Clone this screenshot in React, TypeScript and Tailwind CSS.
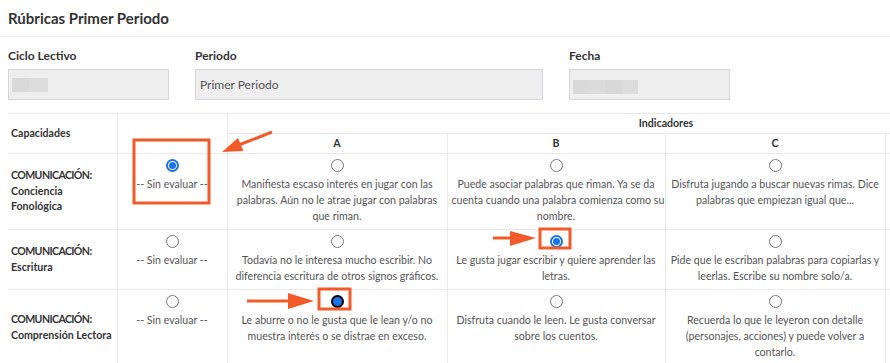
import React from "react";

const font = { fontFamily: "Lato, 'Noto Sans', sans-serif" };

type Cell = { lines: string[]; state?: "on" | "focus" };
type Row = { name: string[]; none: "on" | "off"; cells: Cell[] };

const rows: Row[] = [
  {
    name: ["COMUNICACIÓN:", "Conciencia", "Fonológica"],
    none: "on",
    cells: [
      { lines: ["Manifiesta escaso interés en jugar con las", "palabras. Aún no le atrae jugar con palabras", "que riman."] },
      { lines: ["Puede asociar palabras que riman. Ya se da", "cuenta cuando una palabra comienza como su", "nombre."] },
      { lines: ["Disfruta jugando a buscar nuevas rimas. Dice", "palabras que empiezan igual que..."] },
    ],
  },
  {
    name: ["COMUNICACIÓN:", "Escritura"],
    none: "off",
    cells: [
      { lines: ["Todavía no le interesa mucho escribir. No", "diferencia escritura de otros signos gráficos."] },
      { lines: ["Le gusta jugar escribir y quiere aprender las", "letras."], state: "on" },
      { lines: ["Pide que le escriban palabras para copiarlas y", "leerlas. Escribe su nombre solo/a."] },
    ],
  },
  {
    name: ["COMUNICACIÓN:", "Comprensión Lectora"],
    none: "off",
    cells: [
      { lines: ["Le aburre o no le gusta que le lean y/o no", "muestra interés o se distrae en exceso."], state: "focus" },
      { lines: ["Disfruta cuando le leen. Le gusta conversar", "sobre los cuentos."] },
      { lines: ["Recuerda lo que le leyeron con detalle", "(personajes, acciones) y puede volver a", "contarlo."] },
    ],
  },
];

function Radio({ state }: { state?: "on" | "focus" }) {
  if (state === "focus") {
    return (
      <span className="mx-auto block h-[13px] w-[13px] rounded-full border-2 border-black bg-[#1a73e8]" />
    );
  }
  if (state === "on") {
    return (
      <span className="mx-auto flex h-[13px] w-[13px] items-center justify-center rounded-full border-2 border-[#1a73e8] bg-white">
        <span className="h-[7px] w-[7px] rounded-full bg-[#1a73e8]" />
      </span>
    );
  }
  return <span className="mx-auto block h-[13px] w-[13px] rounded-full border border-[#767676] bg-white" />;
}

function Field({ label, width, children }: { label: string; width: string; children?: React.ReactNode }) {
  return (
    <div className="flex flex-col">
      <span className="text-[12px] leading-[15px] font-bold text-[#333]">{label}</span>
      <div className={`mt-[6px] flex h-[31px] items-center border border-[#d3d5db] bg-[#eeeeee] px-[3px] ${width}`}>
        {children}
      </div>
    </div>
  );
}

export default function App() {
  return (
    <div className="relative h-[363px] w-[890px] overflow-hidden bg-white" style={font}>
      <div className="flex h-[37px] items-center border-b border-[#f0f0f0] px-[8px]">
        <h1 className="text-[15px] font-bold text-[#333]">Rúbricas Primer Periodo</h1>
      </div>

      <div className="flex px-[8px] pt-[11px]">
        <Field label="Ciclo Lectivo" width="w-[161px]">
          <span className="flex h-[14px]">
            <span className="w-[17px] bg-[#d9d9d9]" />
            <span className="w-[19px] bg-[#dcdcdc]" />
          </span>
        </Field>
        <div className="ml-[26px]">
          <Field label="Periodo" width="w-[348px]">
            <span className="pl-[1px] text-[12px] text-[#555]">Primer Periodo</span>
          </Field>
        </div>
        <div className="ml-[26px]">
          <Field label="Fecha" width="w-[161px]">
            <span className="mt-[4px] flex h-[14px]">
              <span className="w-[16px] bg-[#d9d9d9]" />
              <span className="w-[16px] bg-[#dbdbdb]" />
              <span className="w-[17px] bg-[#d8d8d8]" />
              <span className="w-[16px] bg-[#dcdcdc]" />
            </span>
          </Field>
        </div>
      </div>

      <table className="mt-[13px] ml-[8px] w-[1097px] table-fixed border-collapse text-[10.6px] text-[#555]">
        <colgroup>
          <col className="w-[109px]" />
          <col className="w-[110px]" />
          <col className="w-[220px]" />
          <col className="w-[218px]" />
          <col className="w-[220px]" />
          <col className="w-[220px]" />
        </colgroup>
        <thead>
          <tr className="h-[20px]">
            <th rowSpan={2} className="border border-l-0 border-[#e9e9e9] px-[3px] text-left align-middle font-bold text-[#333]">
              Capacidades
            </th>
            <th rowSpan={2} className="border border-[#e9e9e9]" />
            <th colSpan={4} className="border border-[#e9e9e9] p-0 text-center font-bold leading-[19px] text-[#333]">
              Indicadores
            </th>
          </tr>
          <tr className="h-[20px]">
            {["A", "B", "C", ""].map((l, i) => (
              <th key={i} className="border border-[#e9e9e9] p-0 text-center font-bold leading-[19px] text-[#333]">
                {l}
              </th>
            ))}
          </tr>
        </thead>
        <tbody>
          {rows.map((r, i) => (
            <tr key={i}>
              <td className="border border-l-0 border-[#e9e9e9] px-[3px] align-middle leading-[15.5px] font-bold text-[#333]">
                {r.name.map((n, k) => (
                  <div key={n} className={k === 0 ? "whitespace-nowrap tracking-[-0.6px]" : "whitespace-nowrap"}>
                    {n}
                  </div>
                ))}
              </td>
              <td className="border border-[#e9e9e9] px-[4px] pt-[5px] pb-[5px] text-center align-top">
                <Radio state={r.none === "on" ? "on" : undefined} />
                <div className="mt-[4px] leading-[16px] whitespace-nowrap">-- Sin evaluar --</div>
              </td>
              {r.cells.map((c, j) => (
                <td key={j} className="border border-[#e9e9e9] px-[4px] pt-[5px] pb-[5px] text-center align-top">
                  <Radio state={c.state} />
                  <div className="mt-[4px] leading-[16px]">
                    {c.lines.map((l, k) => (
                      <div key={k} className="whitespace-nowrap">{l}</div>
                    ))}
                  </div>
                </td>
              ))}
              <td className="border border-[#e9e9e9]" />
            </tr>
          ))}
        </tbody>
      </table>

      <svg className="pointer-events-none absolute top-0 left-0" width="890" height="363" viewBox="0 0 890 363">
        <g fill="none" stroke="#f25a2a" strokeWidth="3">
          <rect x="134" y="140" width="75" height="63" />
          <rect x="540" y="229" width="30" height="19" />
          <rect x="319" y="289" width="31" height="20" />
          <line x1="272" y1="132" x2="240" y2="144.5" />
          <line x1="493" y1="238" x2="512" y2="238" />
          <line x1="247" y1="301" x2="290" y2="301" />
        </g>
        <g fill="#f25a2a">
          <polygon points="222,152 238,138 243.5,151" />
          <polygon points="536,238 510,231 510,246" />
          <polygon points="314,301 288,293 288,309" />
        </g>
      </svg>
    </div>
  );
}
